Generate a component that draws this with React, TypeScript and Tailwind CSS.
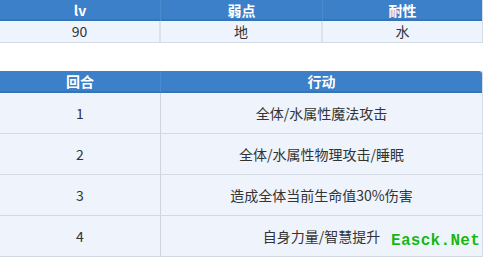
import React from "react";

const font = { fontFamily: '"Microsoft YaHei", "Noto Sans CJK SC", sans-serif' };

const rounds = [
  { n: "1", act: "全体/水属性魔法攻击" },
  { n: "2", act: "全体/水属性物理攻击/睡眠" },
  { n: "3", act: "造成全体当前生命值30%伤害" },
  { n: "4", act: "自身力量/智慧提升" },
];

export default function App() {
  return (
    <div className="relative w-[487px] h-[259px] bg-white overflow-hidden text-[14px] text-[#333]" style={font}>
      {/* Stats table */}
      <div className="w-[483px] border-r border-b border-[#d6dce6]">
        <div className="grid grid-cols-[161px_162px_1fr] h-[21px] bg-[#3b80c9] border-b-2 border-[#3574b8] text-white font-bold">
          <div className="flex items-center justify-center border-r border-[#4a8bd0]">lv</div>
          <div className="flex items-center justify-center border-r border-[#4a8bd0]">弱点</div>
          <div className="flex items-center justify-center">耐性</div>
        </div>
        <div className="grid grid-cols-[161px_162px_1fr] h-[21px] bg-[#eef4fd]">
          <div className="flex items-center justify-center border-r-2 border-[#dde3ec]">90</div>
          <div className="flex items-center justify-center border-r-2 border-[#dde3ec]">地</div>
          <div className="flex items-center justify-center">水</div>
        </div>
      </div>

      {/* Rounds table */}
      <div className="mt-[28px] w-[483px] border-r border-[#d6dce6]">
        <div className="grid grid-cols-[161px_1fr] h-[22px] bg-[#3b80c9] border-b-2 border-[#3574b8] text-white font-bold rounded-tr-[3px]">
          <div className="flex items-center justify-center border-r border-[#4a8bd0]">回合</div>
          <div className="flex items-center justify-center">行动</div>
        </div>
        {rounds.map((r) => (
          <div key={r.n} className="grid grid-cols-[161px_1fr] h-[41px] bg-[#eef3fc] border-b border-[#d3d9e3]">
            <div className="flex items-center justify-center border-r border-[#cfd5df]">{r.n}</div>
            <div className="flex items-center justify-center">{r.act}</div>
          </div>
        ))}
      </div>

      {/* Watermark */}
      <div
        className="absolute left-[391px] top-[231px] text-[16px] leading-[20px] font-bold text-[#18b418] tracking-[0.3px]"
        style={{ fontFamily: '"Liberation Mono", monospace', textShadow: "0 0 2px #fff, 0 0 2px #fff, 0 0 3px #cfc" }}
      >
        Easck.Net
      </div>
    </div>
  );
}
